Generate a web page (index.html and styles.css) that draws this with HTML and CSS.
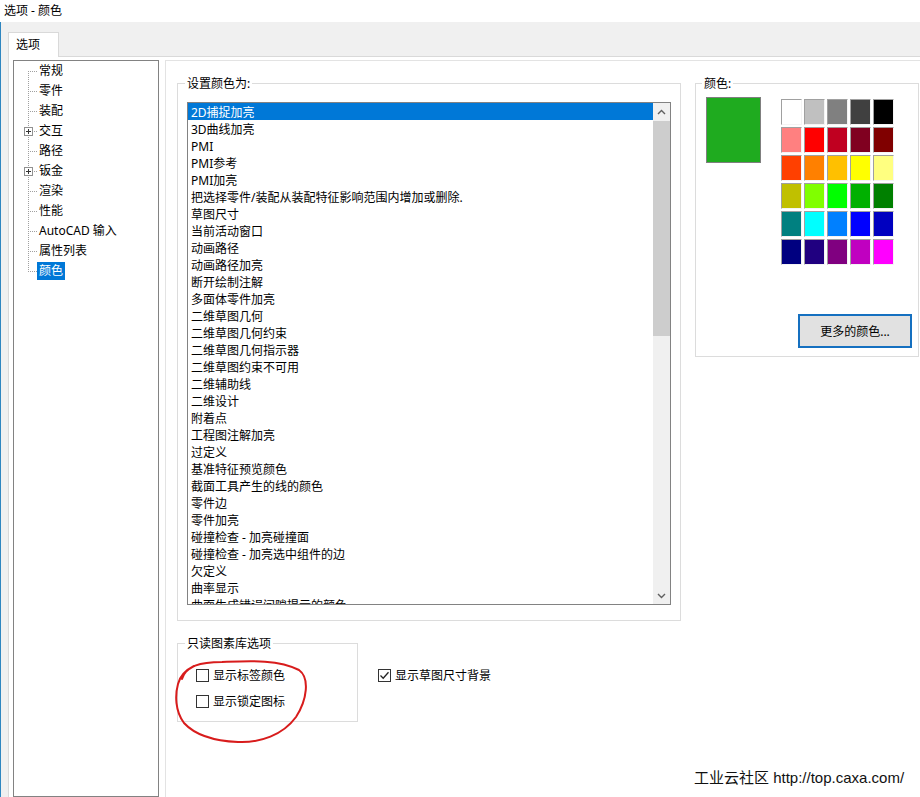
FILE: index.html
```html
<!DOCTYPE html>
<html lang="zh">
<head>
<meta charset="utf-8">
<title>选项 - 颜色</title>
<link rel="stylesheet" href="styles.css">
</head>
<body>
<div class="titlebar">选项 - 颜色</div>
<div class="frame">
  <div class="tabs"><div class="tab">选项</div></div>
  <div class="tabpanel">
    <div class="tree">
      <div class="node first"><span class="twig"></span><span class="label">常规</span></div>
      <div class="node"><span class="twig"></span><span class="label">零件</span></div>
      <div class="node"><span class="twig"></span><span class="label">装配</span></div>
      <div class="node"><span class="twig"><span class="plus"></span></span><span class="label">交互</span></div>
      <div class="node"><span class="twig"></span><span class="label">路径</span></div>
      <div class="node"><span class="twig"><span class="plus"></span></span><span class="label">钣金</span></div>
      <div class="node"><span class="twig"></span><span class="label">渲染</span></div>
      <div class="node"><span class="twig"></span><span class="label">性能</span></div>
      <div class="node"><span class="twig"></span><span class="label">AutoCAD 输入</span></div>
      <div class="node"><span class="twig"></span><span class="label">属性列表</span></div>
      <div class="node last"><span class="twig"></span><span class="label sel">颜色</span></div>
    </div>
    <div class="pane">
      <div class="top-row">
        <fieldset class="group g-list">
          <legend>设置颜色为:</legend>
          <div class="gbody">
            <div class="listbox">
              <div class="items">
                <div class="item sel">2D捕捉加亮</div>
                <div class="item">3D曲线加亮</div>
                <div class="item">PMI</div>
                <div class="item">PMI参考</div>
                <div class="item">PMI加亮</div>
                <div class="item">把选择零件/装配从装配特征影响范围内增加或删除.</div>
                <div class="item">草图尺寸</div>
                <div class="item">当前活动窗口</div>
                <div class="item">动画路径</div>
                <div class="item">动画路径加亮</div>
                <div class="item">断开绘制注解</div>
                <div class="item">多面体零件加亮</div>
                <div class="item">二维草图几何</div>
                <div class="item">二维草图几何约束</div>
                <div class="item">二维草图几何指示器</div>
                <div class="item">二维草图约束不可用</div>
                <div class="item">二维辅助线</div>
                <div class="item">二维设计</div>
                <div class="item">附着点</div>
                <div class="item">工程图注解加亮</div>
                <div class="item">过定义</div>
                <div class="item">基准特征预览颜色</div>
                <div class="item">截面工具产生的线的颜色</div>
                <div class="item">零件边</div>
                <div class="item">零件加亮</div>
                <div class="item">碰撞检查 - 加亮碰撞面</div>
                <div class="item">碰撞检查 - 加亮选中组件的边</div>
                <div class="item">欠定义</div>
                <div class="item">曲率显示</div>
                <div class="item">曲面生成错误间隙提示的颜色</div>
              </div>
              <div class="scrollbar">
                <div class="sb-btn"><svg width="9" height="6" viewBox="0 0 9 6"><path d="M1 5 L4.5 1.5 L8 5" fill="none" stroke="#606060" stroke-width="1.4"/></svg></div>
                <div class="sb-thumb"></div>
                <div class="sb-track"></div>
                <div class="sb-btn"><svg width="9" height="6" viewBox="0 0 9 6"><path d="M1 1 L4.5 4.5 L8 1" fill="none" stroke="#606060" stroke-width="1.4"/></svg></div>
              </div>
            </div>
          </div>
        </fieldset>
        <fieldset class="group g-color">
          <legend>颜色:</legend>
          <div class="gbody">
            <div class="swatch-row">
              <div class="current"></div>
              <div class="palette">
                <span class="cell c-ffffff"></span><span class="cell c-c0c0c0"></span><span class="cell c-808080"></span><span class="cell c-404040"></span><span class="cell c-000000"></span>
                <span class="cell c-ff8080"></span><span class="cell c-ff0000"></span><span class="cell c-c00020"></span><span class="cell c-800020"></span><span class="cell c-800000"></span>
                <span class="cell c-ff4000"></span><span class="cell c-ff8000"></span><span class="cell c-ffc000"></span><span class="cell c-ffff00"></span><span class="cell c-ffff80"></span>
                <span class="cell c-c0c000"></span><span class="cell c-80ff00"></span><span class="cell c-00ff00"></span><span class="cell c-00b000"></span><span class="cell c-008000"></span>
                <span class="cell c-008080"></span><span class="cell c-00ffff"></span><span class="cell c-0080ff"></span><span class="cell c-0000ff"></span><span class="cell c-0000c0"></span>
                <span class="cell c-000080"></span><span class="cell c-200080"></span><span class="cell c-800080"></span><span class="cell c-c000c0"></span><span class="cell c-ff00ff"></span>
              </div>
            </div>
            <button class="more" type="button">更多的颜色...</button>
          </div>
        </fieldset>
      </div>
      <div class="bottom-row">
        <fieldset class="group g-lib">
          <legend>只读图素库选项</legend>
          <div class="gbody">
            <label class="check"><span class="box"></span><span>显示标签颜色</span></label>
            <label class="check"><span class="box"></span><span>显示锁定图标</span></label>
          </div>
        </fieldset>
        <label class="check check-side"><span class="box"><svg width="11" height="11" viewBox="0 0 11 11"><path d="M1.5 5.5 L4.2 8.2 L9.5 2.2" fill="none" stroke="#222" stroke-width="1.3"/></svg></span><span>显示草图尺寸背景</span></label>
      </div>
    </div>
  </div>
</div>
<svg class="annotation" width="145" height="95" viewBox="0 0 145 95"><path d="M12 24 C16 11, 30 7, 52 7 C78 6, 108 4, 129 15 C140 23, 137 45, 126 62 C113 80, 90 88, 68 87 C45 86, 25 80, 14 68 C5 56, 5 40, 8 29 C10 21, 16 15, 24 11" fill="none" stroke="#d81c1c" stroke-width="2" stroke-linecap="round"/></svg>
<div class="watermark">工业云社区 http://top.caxa.com/</div>
</body>
</html>
```
FILE: styles.css
```css
* { box-sizing: border-box; }
html, body { margin: 0; height: 797px; overflow: hidden; }
body {
  width: 920px;
  background: #f0f0f0;
  font: 12px "Noto Sans", "Noto Sans CJK SC", sans-serif;
  color: #000;
  display: flex;
  flex-direction: column;
  position: relative;
}
.titlebar { height: 22px; background: #fff; padding-left: 4px; line-height: 21px; }
.frame { flex: 1; min-height: 0; display: flex; flex-direction: column; border-left: 1px solid #2f86c0; }
.tabs { display: flex; padding: 10px 0 0 7px; }
.tab {
  width: 51px; height: 25px; background: #fff;
  border: 1px solid #d9d9d9; border-bottom: none;
  margin-bottom: -1px; position: relative;
  padding-left: 7px; line-height: 23px;
}
.tabpanel {
  flex: 1; min-height: 0; display: flex;
  background: #fff; margin-left: 7px;
  border-left: 1px solid #d9d9d9; border-top: 1px solid #d9d9d9;
  padding: 3px 0 0 4px;
}
/* tree */
.tree { width: 146px; flex: none; border: 1px solid #828282; }
.node { display: flex; align-items: center; height: 20px; padding-left: 14px; }
.twig {
  width: 9px; height: 20px; flex: none; position: relative;
  background:
    repeating-linear-gradient(to bottom, #a0a0a0 0 1px, transparent 1px 2px) 0 0 / 1px 20px no-repeat,
    repeating-linear-gradient(to right, #a0a0a0 0 1px, transparent 1px 2px) 0 10px / 9px 1px no-repeat;
}
.node.first .twig {
  background:
    repeating-linear-gradient(to bottom, #a0a0a0 0 1px, transparent 1px 2px) 0 10px / 1px 10px no-repeat,
    repeating-linear-gradient(to right, #a0a0a0 0 1px, transparent 1px 2px) 0 10px / 9px 1px no-repeat;
}
.node.last .twig {
  background:
    repeating-linear-gradient(to bottom, #a0a0a0 0 1px, transparent 1px 2px) 0 0 / 1px 11px no-repeat,
    repeating-linear-gradient(to right, #a0a0a0 0 1px, transparent 1px 2px) 0 10px / 9px 1px no-repeat;
}
.plus {
  position: absolute; left: -4px; top: 6px; width: 9px; height: 9px;
  border: 1px solid #919191;
  background:
    linear-gradient(#333, #333) center / 5px 1px no-repeat,
    linear-gradient(#333, #333) center / 1px 5px no-repeat,
    #fff;
}
.label { height: 18px; line-height: 18px; padding: 0 2px; white-space: nowrap; }
.label.sel { background: #0078d7; color: #fff; }
/* right pane */
.pane {
  flex: 1; min-width: 0;
  margin-left: 6px;
  border-left: 1px solid #e3e3e3; border-top: 1px solid #e3e3e3;
  padding: 15px 0 0 11px;
}
.top-row { display: flex; align-items: flex-start; }
.group { margin: 0; padding: 0; border: 1px solid #dcdcdc; min-width: 0; flex: none; }
.group legend { padding: 0 2px; margin-left: 7px; line-height: 15px; }
.g-list { width: 504px; }
.g-list .gbody { padding: 11px 9px 15px 9px; }
.listbox { height: 503px; border: 1px solid #828282; display: flex; }
.items { flex: 1; overflow: hidden; }
.item { height: 17px; line-height: 17px; padding: 1px 0 0 3px; white-space: nowrap; }
.item.sel { background: #0078d7; color: #fff; }
.scrollbar { width: 17px; flex: none; background: #f0f0f0; display: flex; flex-direction: column; }
.sb-btn { height: 17px; flex: none; display: flex; align-items: center; justify-content: center; }
.sb-thumb { height: 215px; margin-top: 1px; background: #cdcdcd; flex: none; }
.sb-track { flex: 1; }
.group.g-color { width: 224px; margin-left: 14px; }
.g-color legend { margin-left: 6px; }
.g-color .gbody { padding: 6px 6px 8px 10px; display: flex; flex-direction: column; }
.swatch-row { display: flex; align-items: flex-start; }
.current { width: 55px; height: 66px; border: 1px solid #7f7f7f; background: #1fab1f; flex: none; }
.palette {
  display: grid; grid-template-columns: repeat(5, 21px); grid-auto-rows: 26px; gap: 2px;
  margin: 2px 0 0 20px;
}
.cell { border: 1px solid; border-color: #a0a0a0 #f4f4f4 #f4f4f4 #a0a0a0; }
.c-ffffff { background: #ffffff; } .c-c0c0c0 { background: #c0c0c0; } .c-808080 { background: #808080; }
.c-404040 { background: #404040; } .c-000000 { background: #000000; }
.c-ff8080 { background: #ff8080; } .c-ff0000 { background: #ff0000; } .c-c00020 { background: #c00020; }
.c-800020 { background: #800020; } .c-800000 { background: #800000; }
.c-ff4000 { background: #ff4000; } .c-ff8000 { background: #ff8000; } .c-ffc000 { background: #ffc000; }
.c-ffff00 { background: #ffff00; } .c-ffff80 { background: #ffff80; }
.c-c0c000 { background: #c0c000; } .c-80ff00 { background: #80ff00; } .c-00ff00 { background: #00ff00; }
.c-00b000 { background: #00b000; } .c-008000 { background: #008000; }
.c-008080 { background: #008080; } .c-00ffff { background: #00ffff; } .c-0080ff { background: #0080ff; }
.c-0000ff { background: #0000ff; } .c-0000c0 { background: #0000c0; }
.c-000080 { background: #000080; } .c-200080 { background: #200080; } .c-800080 { background: #800080; }
.c-c000c0 { background: #c000c0; } .c-ff00ff { background: #ff00ff; }
.more {
  align-self: flex-end; margin-top: 49px;
  width: 114px; height: 34px;
  border: 2px solid #1570c0; background: #e1e1e1;
  font: inherit; color: #000; padding: 0;
}
.bottom-row { display: flex; align-items: flex-start; margin-top: 15px; }
.g-lib { width: 181px; }
.g-lib .gbody { padding: 14px 0 10px 18px; display: flex; flex-direction: column; gap: 6px; }
.check { display: flex; align-items: center; height: 20px; gap: 4px; white-space: nowrap; }
.box {
  width: 13px; height: 13px; flex: none; border: 1px solid #333; background: #fff;
  display: flex; align-items: center; justify-content: center;
}
.check-side { margin: 29px 0 0 20px; }
/* overlays */
.annotation { position: absolute; left: 170px; top: 655px; }
.watermark {
  position: absolute; left: 694px; top: 769px;
  font-family: "Liberation Sans", "Noto Sans CJK SC", sans-serif;
  font-size: 15px; line-height: 18px; color: #111; white-space: nowrap;
}
```
